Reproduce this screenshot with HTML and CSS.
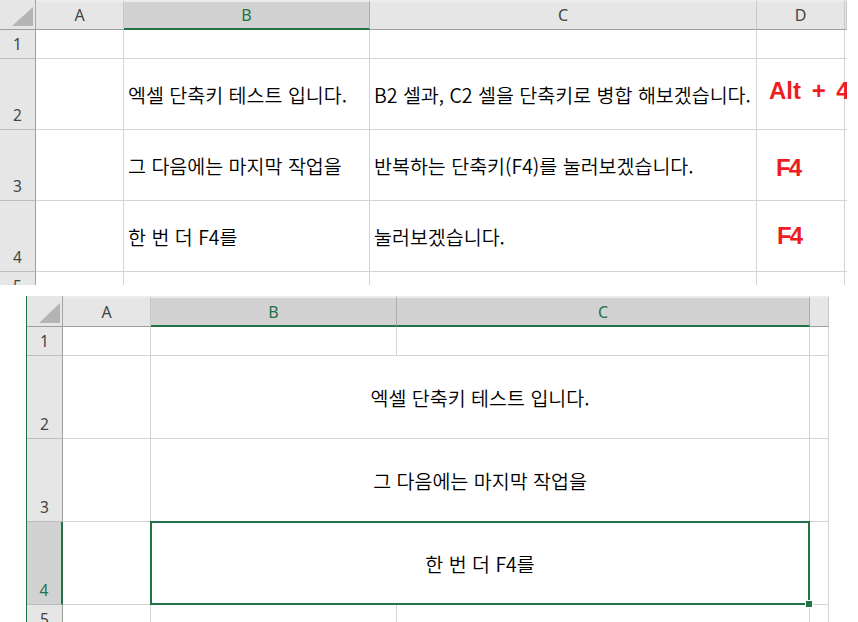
FILE: index.html
```html
<!DOCTYPE html>
<html lang="ko">
<head>
  <meta charset="UTF-8" />
  <meta name="viewport" content="width=device-width, initial-scale=1.0"/>
  <title>엑셀 단축키 테스트</title>
  <link rel="stylesheet" href="styles.css">
</head>
<body>
  <!-- before: plain cells -->
  <div class="sheet sheet-before">
    <div class="corner"><svg width="36" height="30" viewBox="0 0 36 30"><polygon points="33,7 33,26 12,26" fill="#b4b4b4"/></svg></div>
    <div class="colhead">A</div>
    <div class="colhead selected">B</div>
    <div class="colhead">C</div>
    <div class="colhead">D</div>
    <div class="colhead"></div>

    <!-- Row 1 -->
    <div class="rowhead">1</div>
    <div class="cell"></div>
    <div class="cell"></div>
    <div class="cell"></div>
    <div class="cell"></div>
    <div class="cell"></div>

    <!-- Row 2 -->
    <div class="rowhead">2</div>
    <div class="cell"></div>
    <div class="cell">엑셀 단축키 테스트 입니다.</div>
    <div class="cell">B2 셀과, C2 셀을 단축키로 병합 해보겠습니다.</div>
    <div class="cell key key-alt">Alt + 4</div>
    <div class="cell"></div>

    <!-- Row 3 -->
    <div class="rowhead">3</div>
    <div class="cell"></div>
    <div class="cell">그 다음에는 마지막 작업을</div>
    <div class="cell">반복하는 단축키(F4)를 눌러보겠습니다.</div>
    <div class="cell key key-f4a">F4</div>
    <div class="cell"></div>

    <!-- Row 4 -->
    <div class="rowhead">4</div>
    <div class="cell"></div>
    <div class="cell">한 번 더 F4를</div>
    <div class="cell">눌러보겠습니다.</div>
    <div class="cell key key-f4b">F4</div>
    <div class="cell"></div>

    <!-- Row 5 -->
    <div class="rowhead">5</div>
    <div class="cell"></div>
    <div class="cell"></div>
    <div class="cell"></div>
    <div class="cell"></div>
    <div class="cell"></div>
  </div>

  <!-- after: B:C merged -->
  <div class="sheet sheet-after">
    <div class="corner"><svg width="36" height="31" viewBox="0 0 36 31"><polygon points="33,7 33,27 12,27" fill="#b4b4b4"/></svg></div>
    <div class="colhead">A</div>
    <div class="colhead selected">B</div>
    <div class="colhead selected">C</div>
    <div class="colhead"></div>

    <!-- Row 1 -->
    <div class="rowhead">1</div>
    <div class="cell"></div>
    <div class="cell"></div>
    <div class="cell"></div>
    <div class="cell"></div>

    <!-- Row 2 -->
    <div class="rowhead">2</div>
    <div class="cell"></div>
    <div class="cell merged">엑셀 단축키 테스트 입니다.</div>
    <div class="cell"></div>

    <!-- Row 3 -->
    <div class="rowhead">3</div>
    <div class="cell"></div>
    <div class="cell merged">그 다음에는 마지막 작업을</div>
    <div class="cell"></div>

    <!-- Row 4 -->
    <div class="rowhead selected">4</div>
    <div class="cell"></div>
    <div class="cell merged active">한 번 더 F4를<span class="handle"></span></div>
    <div class="cell"></div>

    <!-- Row 5 -->
    <div class="rowhead">5</div>
    <div class="cell"></div>
    <div class="cell"></div>
    <div class="cell"></div>
    <div class="cell"></div>
  </div>
</body>
</html>
```

FILE: styles.css
```css
body {
  margin: 0;
  background-color: #fff;
  font-family: "Noto Sans CJK KR", "Noto Sans", sans-serif;
  color: #000;
}
.sheet {
  display: grid;
  overflow: hidden;
  background-color: #fff;
}
.sheet-before {
  width: 847px;
  height: 285px;
  grid-template-columns: 36px 88px 246px 387px 88px 2px;
  grid-template-rows: 30px 29px 71px 71px 71px 29px;
}
.sheet-after {
  width: 803px;
  height: 326px;
  margin-top: 11px;
  margin-left: 26px;
  border-left: 1px solid #217346;
  grid-template-columns: 36px 88px 246px 413px 19px;
  grid-template-rows: 31px 29px 83px 83px 83px 29px;
}
.corner,
.colhead,
.rowhead,
.cell {
  box-sizing: border-box;
}
.corner {
  background-color: #e6e6e6;
  border-right: 1px solid #a5a5a5;
  border-bottom: 1px solid #9e9e9e;
}
.corner svg {
  display: block;
}
.colhead {
  background-color: #e6e6e6;
  border-top: 2px solid #ececec;
  border-right: 1px solid #c8c8c8;
  border-bottom: 1px solid #9e9e9e;
  font-family: "Noto Sans", sans-serif;
  font-size: 16px;
  color: #444;
  display: flex;
  align-items: center;
  justify-content: center;
  padding-bottom: 1px;
}
.colhead.selected {
  background-color: #d2d2d2;
  color: #217346;
  border-right-color: #ababab;
  border-bottom: 2px solid #217346;
  padding-bottom: 0;
}
.rowhead {
  background-color: #e6e6e6;
  border-right: 1px solid #9e9e9e;
  border-bottom: 1px solid #bdbdbd;
  font-family: "Noto Sans", sans-serif;
  font-size: 15.5px;
  color: #444;
  display: flex;
  align-items: flex-end;
  justify-content: center;
  padding-bottom: 3px;
}
.rowhead.selected {
  background-color: #d2d2d2;
  color: #217346;
  border-right: 2px solid #217346;
}
.cell {
  border-right: 1px solid #d4d4d4;
  border-bottom: 1px solid #d4d4d4;
  display: flex;
  align-items: center;
  padding-left: 4px;
  font-size: 19.5px;
  font-weight: 350;
  white-space: nowrap;
}
.cell.merged {
  grid-column: span 2;
  justify-content: center;
  padding-left: 0;
}
.cell.active {
  position: relative;
  border: 2px solid #217346;
  margin: -1px 0 0 -1px;
}
.handle {
  position: absolute;
  right: -5px;
  bottom: -5px;
  width: 6px;
  height: 6px;
  background-color: #217346;
  border: 1px solid #fff;
}
.key {
  font-family: "Liberation Sans", Arial, sans-serif;
  font-weight: bold;
  font-size: 24px;
  color: #ee1d23;
}
.key-alt {
  padding-left: 12px;
  padding-bottom: 7px;
  word-spacing: 4px;
}
.key-f4a {
  padding-left: 19px;
  padding-top: 6px;
  letter-spacing: -2px;
}
.key-f4b {
  padding-left: 20px;
  letter-spacing: -2px;
}
```
